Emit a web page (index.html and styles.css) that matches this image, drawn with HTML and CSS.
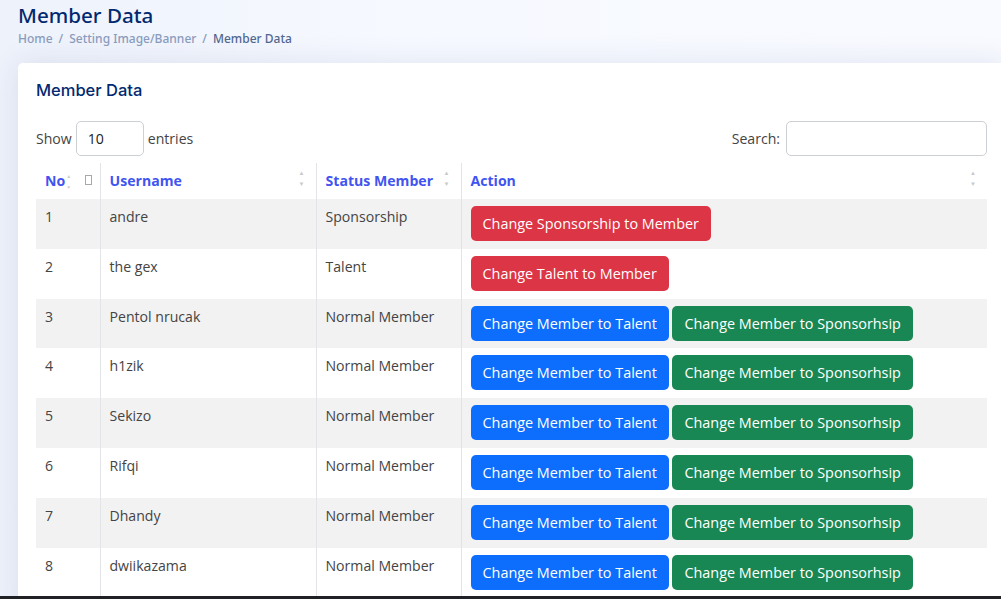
FILE: index.html
```html
<!DOCTYPE html>
<html lang="en">
<head>
<meta charset="utf-8">
<title>Member Data</title>
<link rel="stylesheet" href="styles.css">
</head>
<body>
<main class="main">
  <div class="pagetitle">
    <h1 class="pagetitle-h">Member Data</h1>
    <nav class="breadcrumb">
      <span class="crumb">Home</span>
      <span class="sep">/</span>
      <span class="crumb">Setting Image/Banner</span>
      <span class="sep">/</span>
      <span class="crumb crumb-active">Member Data</span>
    </nav>
  </div>

  <section class="card">
    <h5 class="card-title">Member Data</h5>
    <div class="dt-top">
      <label class="dt-length">Show <span class="dt-input dt-input-len">10</span> entries</label>
      <label class="dt-search">Search: <span class="dt-input dt-input-search"></span></label>
    </div>
    <table class="dt">
      <colgroup>
        <col class="c-no"><col class="c-user"><col class="c-status"><col class="c-action">
      </colgroup>
      <thead>
        <tr>
          <th class="th-no"><span class="th-label">No</span><span class="mini-sort"><span>&#9650;</span><span>&#9660;</span></span><span class="tofu"></span></th>
          <th class="sortable">Username<span class="sort"><span>&#9650;</span><span>&#9660;</span></span></th>
          <th class="sortable">Status Member<span class="sort"><span>&#9650;</span><span>&#9660;</span></span></th>
          <th class="sortable">Action<span class="sort"><span>&#9650;</span><span>&#9660;</span></span></th>
        </tr>
      </thead>
      <tbody>
        <tr class="odd"><td>1</td><td>andre</td><td>Sponsorship</td><td><span class="btn btn-red">Change Sponsorship to Member</span></td></tr>
        <tr><td>2</td><td>the gex</td><td>Talent</td><td><span class="btn btn-red">Change Talent to Member</span></td></tr>
        <tr class="odd"><td>3</td><td>Pentol nrucak</td><td>Normal Member</td><td><span class="btn btn-blue">Change Member to Talent</span> <span class="btn btn-green">Change Member to Sponsorhsip</span></td></tr>
        <tr><td>4</td><td>h1zik</td><td>Normal Member</td><td><span class="btn btn-blue">Change Member to Talent</span> <span class="btn btn-green">Change Member to Sponsorhsip</span></td></tr>
        <tr class="odd"><td>5</td><td>Sekizo</td><td>Normal Member</td><td><span class="btn btn-blue">Change Member to Talent</span> <span class="btn btn-green">Change Member to Sponsorhsip</span></td></tr>
        <tr><td>6</td><td>Rifqi</td><td>Normal Member</td><td><span class="btn btn-blue">Change Member to Talent</span> <span class="btn btn-green">Change Member to Sponsorhsip</span></td></tr>
        <tr class="odd"><td>7</td><td>Dhandy</td><td>Normal Member</td><td><span class="btn btn-blue">Change Member to Talent</span> <span class="btn btn-green">Change Member to Sponsorhsip</span></td></tr>
        <tr><td>8</td><td>dwiikazama</td><td>Normal Member</td><td><span class="btn btn-blue">Change Member to Talent</span> <span class="btn btn-green">Change Member to Sponsorhsip</span></td></tr>
      </tbody>
    </table>
  </section>
</main>
<div class="bottom-bar"></div>
</body>
</html>
```

FILE: styles.css
```css
html, body {
  margin: 0;
  padding: 0;
  overflow: hidden;
  height: 100%;
}
body {
  background: linear-gradient(90deg, #eef2fb 0%, #f6f9ff 40%, #f8faff 100%);
  font-family: "Open Sans", "Noto Sans", sans-serif;
  color: #444444;
  font-size: 14.1px;
}
.main {
  padding: 0 0 0 18px;
  width: 989px;
}
.pagetitle {
  margin-bottom: 17px;
}
.pagetitle-h {
  margin: 0;
  padding-top: 3px;
  font-family: "Noto Sans", sans-serif;
  font-size: 20.6px;
  font-weight: 500;
  line-height: 1.2;
  color: #012970;
}
.breadcrumb {
  display: flex;
  align-items: center;
  font-family: "Noto Sans", sans-serif;
  font-size: 12px;
  font-weight: 500;
  color: #899bbd;
  margin-top: 4px;
  line-height: 1.2;
}
.sep {
  padding: 0 6px;
}
.crumb-active {
  color: #51678f;
}
.card {
  background: #fff;
  border-radius: 5px;
  box-shadow: 0 0 30px rgba(1, 41, 112, 0.1);
  padding: 0 20px 20px 18px;
  width: 951px;
}
.card-title {
  margin: 0;
  padding: 18px 0 20px;
  font-family: "Inter", "Lato", sans-serif;
  font-size: 16.5px;
  font-weight: 500;
  line-height: 1.2;
  color: #012970;
}
.dt-top {
  display: flex;
  justify-content: space-between;
  align-items: center;
  margin-bottom: 7px;
}
.dt-length, .dt-search {
  display: flex;
  align-items: center;
  gap: 4px;
  color: #444;
}
.dt-input {
  display: inline-block;
  box-sizing: border-box;
  height: 35px;
  border: 1px solid #cccfd4;
  border-radius: 5px;
  background: #fff;
  line-height: 33px;
  color: #222;
}
.dt-input-len {
  width: 68px;
  padding-left: 11px;
}
.dt-input-search {
  width: 201px;
  margin-left: 2px;
}
.dt {
  width: 951px;
  border-collapse: collapse;
  table-layout: fixed;
}
.c-no { width: 64px; }
.c-user { width: 216px; }
.c-status { width: 145px; }
.c-action { width: 526px; }
.dt th {
  position: relative;
  text-align: left;
  color: #4154f1;
  font-weight: 700;
  padding: 8px 9px;
  line-height: 20px;
  border-left: 1px solid #e2e4e8;
  white-space: nowrap;
}
.dt th:first-child, .dt td:first-child {
  border-left: none;
}
.dt td {
  padding: 7px 9px 7.86px;
  line-height: 21px;
  vertical-align: top;
  border-left: 1px solid #e2e4e8;
  white-space: nowrap;
}
.dt tr.odd td {
  background: #f2f2f2;
}
.sort {
  position: absolute;
  right: 11px;
  top: 7px;
  display: flex;
  flex-direction: column;
  gap: 5px;
  font-size: 6px;
  line-height: 6px;
  color: #c9c9c9;
}
.mini-sort {
  display: inline-flex;
  flex-direction: column;
  gap: 6px;
  vertical-align: top;
  font-size: 5px;
  line-height: 5px;
  color: #cfcfcf;
  margin-left: 1px;
  margin-top: 3px;
}
.tofu {
  position: absolute;
  left: 49px;
  top: 12px;
  width: 5px;
  height: 8px;
  border: 1px solid #a8a8a8;
}
.btn {
  display: inline-block;
  box-sizing: border-box;
  height: 35px;
  padding: 6px 11px;
  border-radius: 5px;
  color: #fff;
  font-size: 14.4px;
  line-height: 21px;
  border: 1px solid transparent;
}
.btn-red { background: #dc3545; }
.btn-blue { background: #0d6efd; }
.btn-green { background: #198754; }
.bottom-bar {
  position: fixed;
  left: 0;
  right: 0;
  bottom: 0;
  height: 3px;
  background: #202124;
}
```
